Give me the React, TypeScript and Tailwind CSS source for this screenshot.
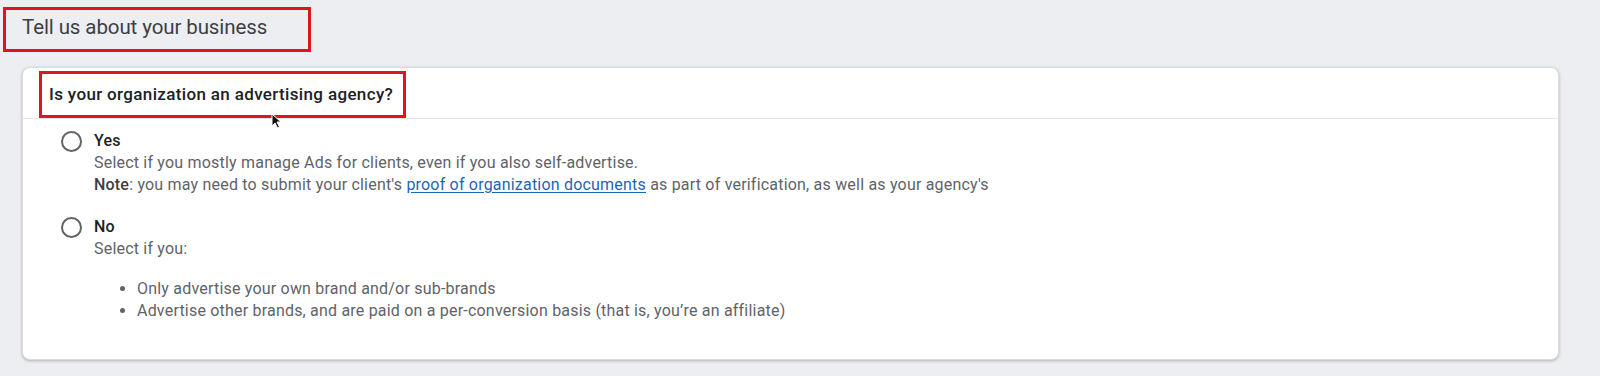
const font = { fontFamily: 'Roboto, "Noto Sans", Arial, sans-serif' };

function Radio() {
  return <span className="block w-[21px] h-[21px] rounded-full border-2 border-[#5f6368] bg-white" />;
}

function Cursor() {
  return (
    <svg className="absolute left-[271px] top-[113px]" width="12" height="16" viewBox="0 0 12 16">
      <path d="M1 1 L1 13 L4 10 L6.5 15 L8.5 14 L6 9 L10 9 Z" fill="#111" stroke="#fff" strokeWidth="1" />
    </svg>
  );
}

export default function App() {
  return (
    <div className="relative w-[1600px] h-[376px] bg-[#eceef1] overflow-hidden pt-[7px]" style={font}>
      <div className="ml-[3px] w-[308px] h-[45px] border-[3px] border-[#e0141e] flex items-center pl-[16px] pb-[4px]">
        <h1 className="text-[20.5px] text-[#3c4043] tracking-[-0.1px]">Tell us about your business</h1>
      </div>

      <div className="mt-[15px] ml-[22px] w-[1537px] h-[293px] bg-white rounded-[8px] border border-[#dadce0] shadow-[0_1px_3px_rgba(60,64,67,0.35)]">
        <div className="h-[51px] border-b border-[#e3e5e8] pt-[3px] pl-[16px]">
          <div className="w-[367px] h-[47px] border-[3px] border-[#e0141e] flex items-center pl-[7px]">
            <span className="text-[17px] font-medium text-[#202124] tracking-[0.35px]">Is your organization an advertising agency?</span>
          </div>
        </div>

        <div className="pl-[38px] pt-[11px] text-[16px] leading-[22px] tracking-[0.2px] text-[#5f6368]">
          <div className="flex gap-[12px]">
            <div className="pt-[1px]"><Radio /></div>
            <div>
              <div className="font-medium text-[#202124]">Yes</div>
              <div>Select if you mostly manage Ads for clients, even if you also self-advertise.</div>
              <div>
                <span className="font-medium text-[#3c4043]">Note</span>: you may need to submit your client's{' '}
                <a href="#" className="text-[#1f64b4] underline underline-offset-2 decoration-[#1f64b4]">proof of organization documents</a>{' '}
                as part of verification, as well as your agency's
              </div>
            </div>
          </div>

          <div className="flex gap-[12px] mt-[20px]">
            <div className="pt-[1px]"><Radio /></div>
            <div>
              <div className="font-medium text-[#202124]">No</div>
              <div>Select if you:</div>
              <ul className="mt-[18px] pl-[43px] list-disc marker:text-[#5f6368]">
                <li>Only advertise your own brand and/or sub-brands</li>
                <li>Advertise other brands, and are paid on a per-conversion basis (that is, you’re an affiliate)</li>
              </ul>
            </div>
          </div>
        </div>
      </div>

      <Cursor />
    </div>
  );
}
